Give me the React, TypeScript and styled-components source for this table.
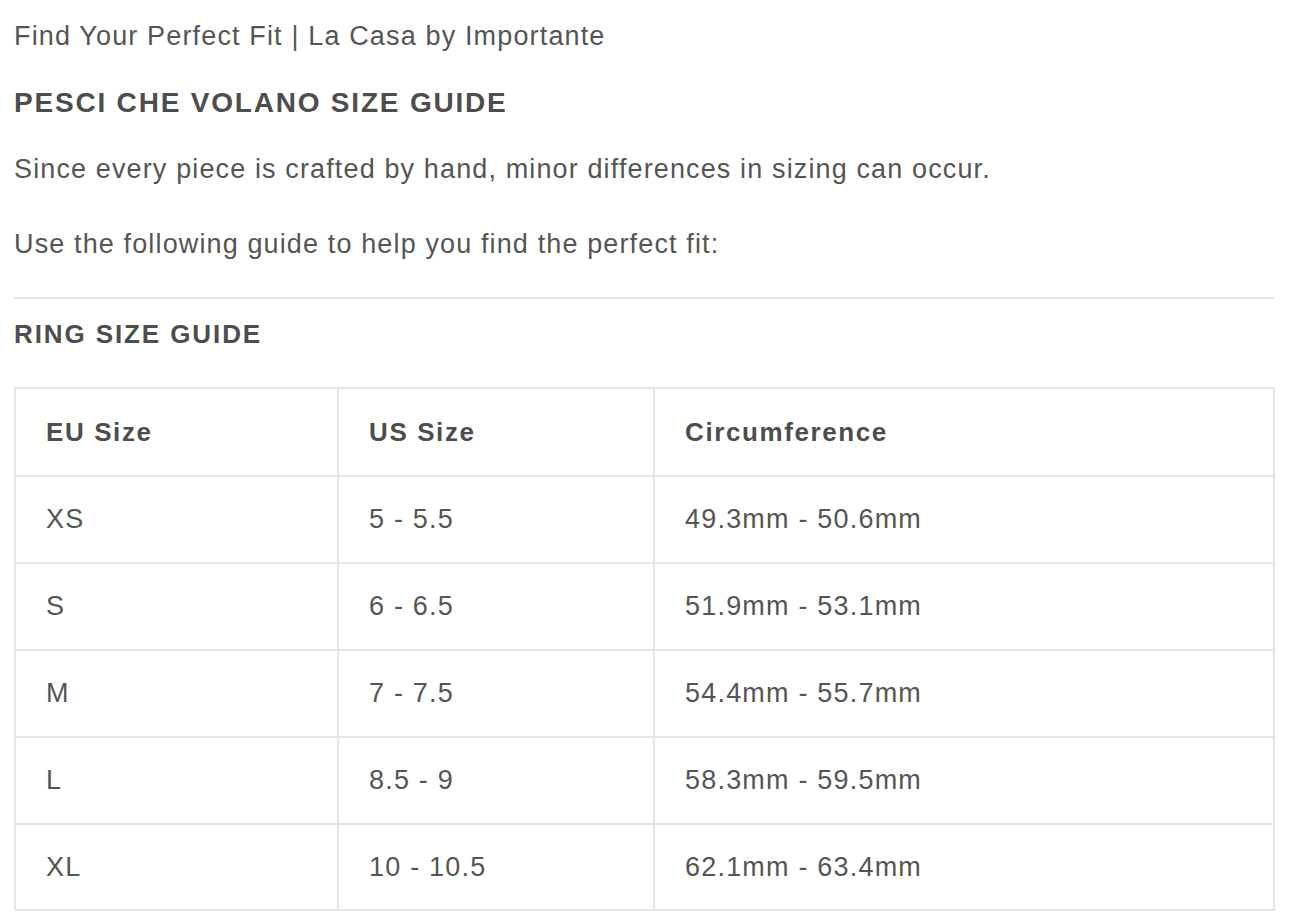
import styled, { createGlobalStyle } from 'styled-components';

const GlobalStyle = createGlobalStyle`
  *, *::before, *::after {
    box-sizing: border-box;
  }
  html, body {
    margin: 0;
    padding: 0;
    background: #ffffff;
  }
  body {
    font-family: "Liberation Sans", Arial, sans-serif;
    color: #505050;
  }
`;

const Page = styled.main`
  width: 1274px;
  padding: 18px 0 0 14px;
`;

const PageTitle = styled.h1`
  margin: 0;
  font-size: 27px;
  font-weight: 400;
  line-height: 36px;
  letter-spacing: 1.15px;
  color: #555555;
`;

const Heading = styled.h2<{ $top: number; $size: number; $spacing: number }>`
  margin: ${(p) => p.$top}px 0 0;
  font-size: ${(p) => p.$size}px;
  font-weight: 700;
  line-height: 36px;
  letter-spacing: ${(p) => p.$spacing}px;
  text-transform: uppercase;
  color: #4d4d4d;
`;

const Text = styled.p<{ $top: number }>`
  margin: ${(p) => p.$top}px 0 0;
  font-size: 27px;
  line-height: 36px;
  letter-spacing: 1.13px;
  color: #555555;
`;

const Rule = styled.hr`
  margin: 35px 0 0;
  border: none;
  height: 2px;
  background: #e6e6e1;
`;

const SizeTable = styled.table`
  margin-top: 35px;
  width: 1259px;
  border-collapse: collapse;
  border: 2px solid #e6e6e1;
  table-layout: fixed;
`;

const HeadCell = styled.th<{ $w: number }>`
  width: ${(p) => p.$w}px;
  height: 88px;
  padding: 0 31px 0 30px;
  border: 2px solid #e6e6e1;
  text-align: left;
  font-size: 26px;
  font-weight: 700;
  letter-spacing: 1.6px;
  color: #4d4d4d;
`;

const Cell = styled.td`
  height: 87px;
  padding: 0 31px 0 30px;
  border: 2px solid #e6e6e1;
  font-size: 27px;
  letter-spacing: 1.2px;
  color: #555555;

  tr:last-child > & {
    height: 86px;
  }
`;

const rows = [
  ['XS', '5 - 5.5', '49.3mm - 50.6mm'],
  ['S', '6 - 6.5', '51.9mm - 53.1mm'],
  ['M', '7 - 7.5', '54.4mm - 55.7mm'],
  ['L', '8.5 - 9', '58.3mm - 59.5mm'],
  ['XL', '10 - 10.5', '62.1mm - 63.4mm'],
];

export default function App() {
  return (
    <>
      <GlobalStyle />
      <Page>
        <PageTitle>Find Your Perfect Fit | La Casa by Importante</PageTitle>
        <Heading $top={31} $size={28} $spacing={1.8}>Pesci Che Volano Size Guide</Heading>
        <Text $top={30}>Since every piece is crafted by hand, minor differences in sizing can occur.</Text>
        <Text $top={39}>Use the following guide to help you find the perfect fit:</Text>
        <Rule />
        <Heading $top={17} $size={26} $spacing={1.9}>Ring Size Guide</Heading>
        <SizeTable>
          <thead>
            <tr>
              <HeadCell $w={323}>EU Size</HeadCell>
              <HeadCell $w={316}>US Size</HeadCell>
              <HeadCell $w={620}>Circumference</HeadCell>
            </tr>
          </thead>
          <tbody>
            {rows.map((r) => (
              <tr key={r[0]}>
                {r.map((v, i) => (
                  <Cell key={i}>{v}</Cell>
                ))}
              </tr>
            ))}
          </tbody>
        </SizeTable>
      </Page>
    </>
  );
}
